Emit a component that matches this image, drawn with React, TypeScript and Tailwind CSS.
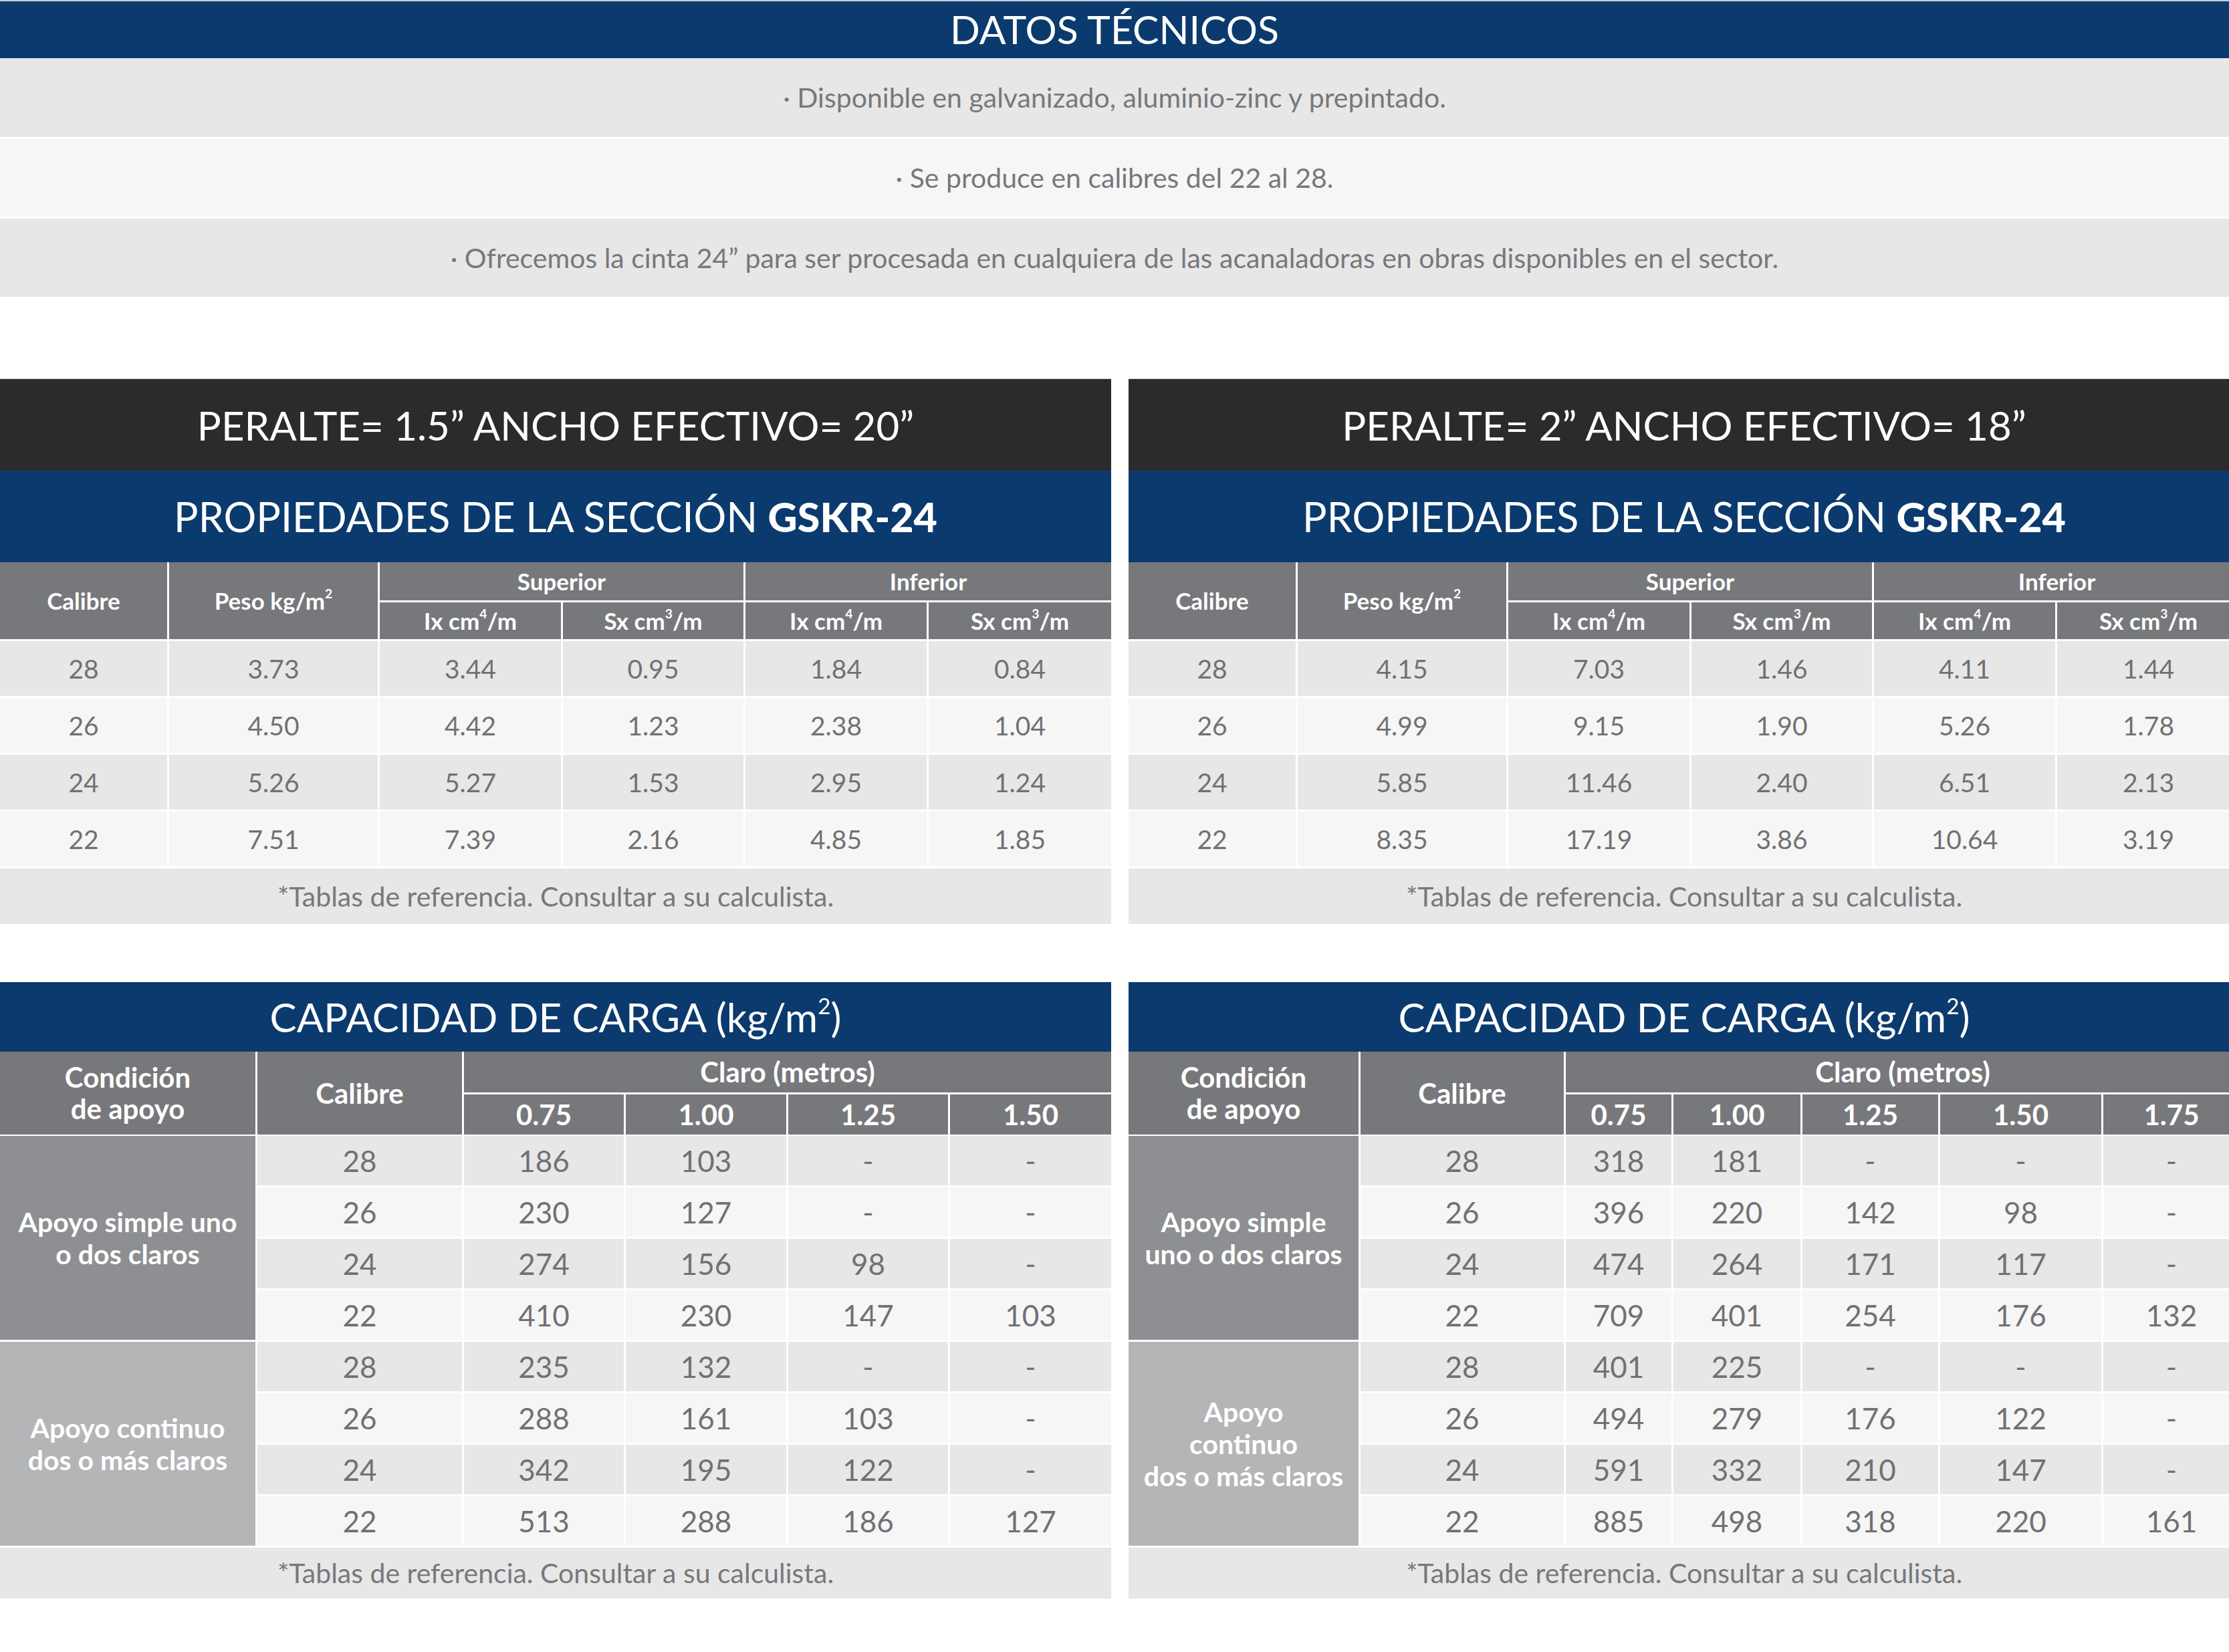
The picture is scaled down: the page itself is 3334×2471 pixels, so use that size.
import React from "react";

type PropRow = [string, string, string, string, string, string];
type CapRow = { cal: string; vals: string[] };

const propsLeft: PropRow[] = [
  ["28", "3.73", "3.44", "0.95", "1.84", "0.84"],
  ["26", "4.50", "4.42", "1.23", "2.38", "1.04"],
  ["24", "5.26", "5.27", "1.53", "2.95", "1.24"],
  ["22", "7.51", "7.39", "2.16", "4.85", "1.85"],
];

const propsRight: PropRow[] = [
  ["28", "4.15", "7.03", "1.46", "4.11", "1.44"],
  ["26", "4.99", "9.15", "1.90", "5.26", "1.78"],
  ["24", "5.85", "11.46", "2.40", "6.51", "2.13"],
  ["22", "8.35", "17.19", "3.86", "10.64", "3.19"],
];

const capLeft: CapRow[][] = [
  [
    { cal: "28", vals: ["186", "103", "-", "-"] },
    { cal: "26", vals: ["230", "127", "-", "-"] },
    { cal: "24", vals: ["274", "156", "98", "-"] },
    { cal: "22", vals: ["410", "230", "147", "103"] },
  ],
  [
    { cal: "28", vals: ["235", "132", "-", "-"] },
    { cal: "26", vals: ["288", "161", "103", "-"] },
    { cal: "24", vals: ["342", "195", "122", "-"] },
    { cal: "22", vals: ["513", "288", "186", "127"] },
  ],
];

const capRight: CapRow[][] = [
  [
    { cal: "28", vals: ["318", "181", "-", "-", "-"] },
    { cal: "26", vals: ["396", "220", "142", "98", "-"] },
    { cal: "24", vals: ["474", "264", "171", "117", "-"] },
    { cal: "22", vals: ["709", "401", "254", "176", "132"] },
  ],
  [
    { cal: "28", vals: ["401", "225", "-", "-", "-"] },
    { cal: "26", vals: ["494", "279", "176", "122", "-"] },
    { cal: "24", vals: ["591", "332", "210", "147", "-"] },
    { cal: "22", vals: ["885", "498", "318", "220", "161"] },
  ],
];

function Sup({ children }: { children: React.ReactNode }) {
  return <span className="relative -top-[0.5em] text-[0.55em]">{children}</span>;
}

function Footnote({ h }: { h: string }) {
  return (
    <div className={`${h} flex items-center justify-center bg-[#e7e7e7] text-[41px] text-[#77787b]`}>
      *Tablas de referencia. Consultar a su calculista.
    </div>
  );
}

function PropsPanel({ title, rows }: { title: React.ReactNode; rows: PropRow[] }) {
  const cols = "grid-cols-[250px_312px_271px_270px_271px_273px]";
  const hd = "flex items-center justify-center bg-[#77787b] text-[35px] font-bold text-white";
  return (
    <div className="w-[1662px] shrink-0 border-t border-[#d4d5d7]">
      <div className="flex h-[137px] items-center justify-center bg-[#2b2b2b] text-[60px] text-white">
        {title}
      </div>
      <div className="flex h-[137px] items-center justify-center bg-[#0b3a6e] text-[61px] text-white">
        PROPIEDADES DE LA SECCIÓN&nbsp;<span className="font-black">GSKR-24</span>
      </div>
      <div className="flex flex-col gap-[3px] bg-white">
        <div className={`grid ${cols} grid-rows-[57px_55px] gap-[3px]`}>
          <div className={`${hd} row-span-2`}>Calibre</div>
          <div className={`${hd} row-span-2`}>
            Peso kg/m<Sup>2</Sup>
          </div>
          <div className={`${hd} col-span-2`}>Superior</div>
          <div className={`${hd} col-span-2`}>Inferior</div>
          <div className={hd}>
            Ix cm<Sup>4</Sup>/m
          </div>
          <div className={hd}>
            Sx cm<Sup>3</Sup>/m
          </div>
          <div className={hd}>
            Ix cm<Sup>4</Sup>/m
          </div>
          <div className={hd}>
            Sx cm<Sup>3</Sup>/m
          </div>
        </div>
        <div className={`grid ${cols} auto-rows-[82px] gap-[3px]`}>
          {rows.map((r, i) =>
            r.map((v, j) => (
              <div
                key={`${i}-${j}`}
                className={`flex items-center justify-center text-[39px] text-[#707174] ${
                  i % 2 === 0 ? "bg-[#e7e7e7]" : "bg-[#f6f6f6]"
                }`}
              >
                {v}
              </div>
            ))
          )}
        </div>
        <Footnote h="h-[83px]" />
      </div>
    </div>
  );
}

function CapacityPanel({
  cols,
  spans,
  groups,
  labels,
}: {
  cols: string;
  spans: string[];
  groups: CapRow[][];
  labels: React.ReactNode[];
}) {
  const hd = "flex items-center justify-center bg-[#77787b] text-[42px] font-bold leading-[47px] text-white";
  const groupBg = ["bg-[#8e8f92]", "bg-[#b4b5b7]"];
  const rowSpan = ["row-start-1 row-span-4", "row-start-5 row-span-4"];
  return (
    <div className="w-[1662px] shrink-0">
      <div className="flex h-[104px] items-center justify-center bg-[#0b3a6e] text-[60px] text-white">
        CAPACIDAD DE CARGA (kg/m<Sup>2</Sup>)
      </div>
      <div className="flex flex-col gap-[2px] bg-white">
        <div className={`grid ${cols} grid-rows-[61px_60px] gap-[3px]`}>
          <div className={`${hd} row-span-2 text-center`}>
            Condición
            <br />
            de apoyo
          </div>
          <div className={`${hd} row-span-2`}>Calibre</div>
          <div className={`${hd} ${spans[0]}`}>Claro (metros)</div>
          {spans.slice(1).map((s) => (
            <div key={s} className={hd}>
              {s}
            </div>
          ))}
        </div>
        <div className={`grid ${cols} grid-rows-[repeat(8,74px)] gap-[3px]`}>
          {groups.map((g, gi) => (
            <React.Fragment key={gi}>
              <div
                className={`col-start-1 ${rowSpan[gi]} ${groupBg[gi]} flex items-center justify-center text-center text-[41px] font-bold leading-[48px] text-white`}
              >
                {labels[gi]}
              </div>
              {g.map((r, ri) =>
                [r.cal, ...r.vals].map((v, vi) => (
                  <div
                    key={`${gi}-${ri}-${vi}`}
                    className={`flex items-center justify-center text-[44px] text-[#707174] ${
                      ri % 2 === 0 ? "bg-[#e7e7e7]" : "bg-[#f6f6f6]"
                    }`}
                  >
                    {v}
                  </div>
                ))
              )}
            </React.Fragment>
          ))}
        </div>
        <div className="mt-px">
          <Footnote h="h-[76px]" />
        </div>
      </div>
    </div>
  );
}

export default function App() {
  const bullet = "flex items-center justify-center text-[41px] text-[#77787b]";
  return (
    <div className="min-h-[2471px] w-[3334px] overflow-hidden bg-white font-[Lato,'Open_Sans',sans-serif]">
      <section className="border-t-2 border-[#c9cdd3]">
        <div className="flex h-[85px] items-center justify-center bg-[#0b3a6e] text-[59px] text-white">
          DATOS TÉCNICOS
        </div>
        <div className="flex flex-col gap-[3px]">
          <div className={`${bullet} h-[118px] bg-[#e7e7e7]`}>
            · Disponible en galvanizado, aluminio-zinc y prepintado.
          </div>
          <div className={`${bullet} h-[116px] bg-[#f6f6f6]`}>· Se produce en calibres del 22 al 28.</div>
          <div className={`${bullet} h-[117px] bg-[#e7e7e7]`}>
            · Ofrecemos la cinta 24” para ser procesada en cualquiera de las acanaladoras en obras disponibles en el
            sector.
          </div>
        </div>
      </section>

      <div className="mt-[122px] flex gap-[26px]">
        <PropsPanel title="PERALTE= 1.5” ANCHO EFECTIVO= 20”" rows={propsLeft} />
        <PropsPanel title="PERALTE= 2” ANCHO EFECTIVO= 18”" rows={propsRight} />
      </div>

      <div className="mt-[87px] flex gap-[26px]">
        <CapacityPanel
          cols="grid-cols-[382px_306px_239px_240px_239px_241px]"
          spans={["col-span-4", "0.75", "1.00", "1.25", "1.50"]}
          groups={capLeft}
          labels={[
            <>
              Apoyo simple uno
              <br />o dos claros
            </>,
            <>
              Apoyo continuo
              <br />
              dos o más claros
            </>,
          ]}
        />
        <CapacityPanel
          cols="grid-cols-[344px_304px_158px_190px_203px_241px_204px]"
          spans={["col-span-5", "0.75", "1.00", "1.25", "1.50", "1.75"]}
          groups={capRight}
          labels={[
            <>
              Apoyo simple
              <br />
              uno o dos claros
            </>,
            <>
              Apoyo
              <br />
              continuo
              <br />
              dos o más claros
            </>,
          ]}
        />
      </div>
    </div>
  );
}
